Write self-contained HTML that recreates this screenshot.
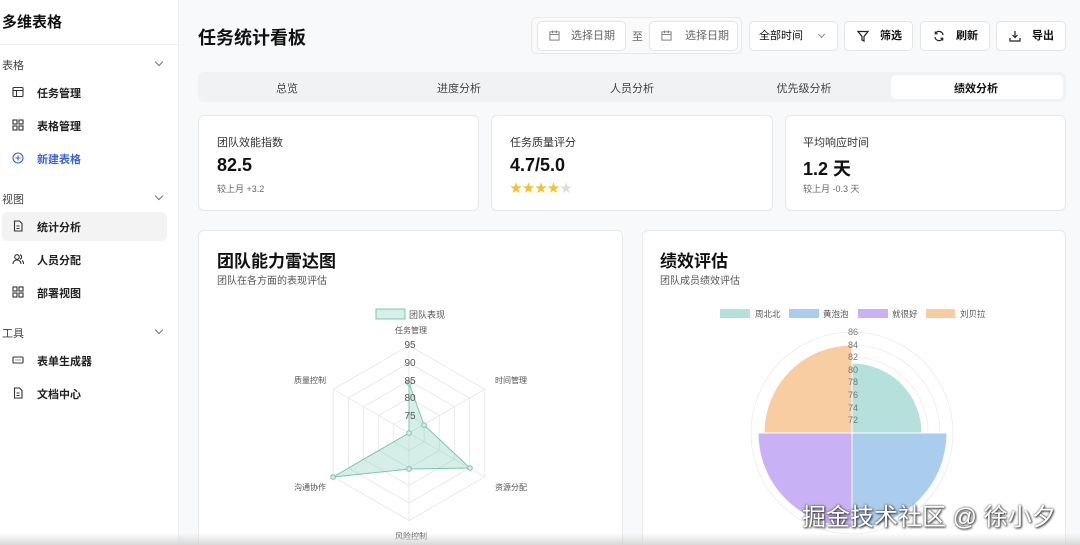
<!DOCTYPE html>
<html style="width:1080px;height:545px;overflow:hidden"><head><meta charset="utf-8"><style>
*{margin:0;padding:0;box-sizing:border-box}
body{width:1080px;height:545px;overflow:hidden;background:#f8f9fa;font-family:"Liberation Sans","Noto Sans CJK SC",sans-serif;color:#111;position:relative}
.abs{position:absolute}
.side{position:absolute;left:0;top:0;width:179px;height:545px;background:#fff;border-right:1px solid #eceef0}
.sec{position:absolute;left:2px;font-size:11px;color:#444}
.chev{position:absolute;left:156px;width:6px;height:6px;border-right:1px solid #777;border-bottom:1px solid #777;transform:rotate(45deg)}
.item{position:absolute;left:37px;font-size:11px;font-weight:600;color:#222}
.ico{position:absolute;left:12px}
.card{position:absolute;background:#fff;border:1px solid #e6e8ea;border-radius:6px}
.btn{position:absolute;background:#fff;border:1px solid #e3e5e7;border-radius:5px;height:30px;font-size:11px;font-weight:600;line-height:28px}
.lbl{font-size:11px;color:#333}
.val{font-size:18px;font-weight:700}
.sub{font-size:9px;color:#666}
.tab{position:absolute;top:80px;font-size:11px;color:#444;text-align:center;width:170px}
</style></head><body>
<div class="side">
 <div class="abs" style="left:2px;top:11px;font-size:15px;font-weight:700">多维表格</div>
 <div class="abs" style="left:0;top:44px;width:179px;height:1px;background:#eceef0"></div>
 <div class="sec" style="top:57px">表格</div><div class="chev" style="top:59px"></div>
 <svg class="ico" style="top:86px" width="12" height="12" viewBox="0 0 12 12" fill="none" stroke="#333" stroke-width="1.1"><rect x="1" y="1.5" width="10" height="9" rx="1"/><path d="M1 4.5h10M4.5 4.5v6"/></svg>
 <div class="item" style="top:85px">任务管理</div>
 <svg class="ico" style="top:119px" width="12" height="12" viewBox="0 0 12 12" fill="none" stroke="#333" stroke-width="1.1"><rect x="1" y="1" width="4" height="4"/><rect x="7" y="1" width="4" height="4"/><rect x="1" y="7" width="4" height="4"/><rect x="7" y="7" width="4" height="4"/></svg>
 <div class="item" style="top:118px">表格管理</div>
 <svg class="ico" style="top:152px" width="12" height="12" viewBox="0 0 12 12" fill="none" stroke="#3a63d8" stroke-width="1.1"><circle cx="6" cy="6" r="5"/><path d="M6 3.5v5M3.5 6h5"/></svg>
 <div class="item" style="top:151px;color:#3a63d8">新建表格</div>
 <div class="sec" style="top:191px">视图</div><div class="chev" style="top:193px"></div>
 <div class="abs" style="left:2px;top:212px;width:165px;height:29px;background:#f3f3f4;border-radius:5px"></div>
 <svg class="ico" style="top:220px" width="12" height="12" viewBox="0 0 12 12" fill="none" stroke="#333" stroke-width="1.1"><path d="M2.5 1h5l2.5 2.5V11h-7.5z M4.5 6h3M4.5 8.5h3"/></svg>
 <div class="item" style="top:219px">统计分析</div>
 <svg class="ico" style="top:253px" width="12" height="12" viewBox="0 0 12 12" fill="none" stroke="#333" stroke-width="1.1"><circle cx="5" cy="4" r="2.3"/><path d="M1 11c0-2.5 1.8-4 4-4s4 1.5 4 4M8 1.8a2.3 2.3 0 0 1 0 4.4M10 7.5c1 .6 1.5 1.8 1.5 3.5"/></svg>
 <div class="item" style="top:252px">人员分配</div>
 <svg class="ico" style="top:286px" width="12" height="12" viewBox="0 0 12 12" fill="none" stroke="#333" stroke-width="1.1"><rect x="1" y="1" width="4" height="4"/><rect x="7" y="1" width="4" height="4"/><rect x="1" y="7" width="4" height="4"/><rect x="7" y="7" width="4" height="4"/></svg>
 <div class="item" style="top:285px">部署视图</div>
 <div class="sec" style="top:325px">工具</div><div class="chev" style="top:327px"></div>
 <svg class="ico" style="top:354px" width="12" height="12" viewBox="0 0 12 12" fill="none" stroke="#333" stroke-width="1.1"><rect x="1" y="3" width="10" height="6" rx="1"/><path d="M3.5 6h1M5.5 6h1M7.5 6h1"/></svg>
 <div class="item" style="top:353px">表单生成器</div>
 <svg class="ico" style="top:387px" width="12" height="12" viewBox="0 0 12 12" fill="none" stroke="#333" stroke-width="1.1"><path d="M2.5 1h5l2.5 2.5V11h-7.5z M4.5 6h3M4.5 8.5h3"/></svg>
 <div class="item" style="top:386px">文档中心</div>
</div>

<div class="abs" style="left:198px;top:24px;font-size:18px;font-weight:700">任务统计看板</div>

<div class="abs" style="left:531px;top:17px;width:211px;height:37px;border:1px solid #e6e8ea;border-radius:5px;background:#fafafa"></div>
<div class="btn" style="left:537px;top:21px;width:89px;font-weight:400;color:#666"><svg class="abs" style="left:11px;top:8px" width="11" height="11" viewBox="0 0 12 12" fill="none" stroke="#777"><rect x="1" y="2" width="10" height="9"/><path d="M1 5h10M4 0.5v3M8 0.5v3"/></svg><span class="abs" style="left:33px">选择日期</span></div>
<div class="abs" style="left:632px;top:28px;font-size:11px;color:#666">至</div>
<div class="btn" style="left:649px;top:21px;width:89px;font-weight:400;color:#666"><svg class="abs" style="left:11px;top:8px" width="11" height="11" viewBox="0 0 12 12" fill="none" stroke="#777"><rect x="1" y="2" width="10" height="9"/><path d="M1 5h10M4 0.5v3M8 0.5v3"/></svg><span class="abs" style="left:35px">选择日期</span></div>
<div class="btn" style="left:749px;top:21px;width:89px;font-weight:400;color:#111"><span class="abs" style="left:9px">全部时间</span><div class="abs" style="left:69px;top:10px;width:5px;height:5px;border-right:1px solid #888;border-bottom:1px solid #888;transform:rotate(45deg)"></div></div>
<div class="btn" style="left:844px;top:21px;width:69px"><svg class="abs" style="left:12px;top:8px" width="12" height="12" viewBox="0 0 12 12" fill="none" stroke="#222" stroke-width="1.2"><path d="M1 1.5h10L7 6.5V11L5 10V6.5z"/></svg><span class="abs" style="left:35px">筛选</span></div>
<div class="btn" style="left:920px;top:21px;width:70px"><svg class="abs" style="left:12px;top:8px" width="12" height="12" viewBox="0 0 12 12" fill="none" stroke="#222" stroke-width="1.2"><path d="M10 5a4 4 0 0 0-7.5-1.5M2 7a4 4 0 0 0 7.5 1.5M2.3 1.5v2.3h2.3M9.7 10.5V8.2H7.4"/></svg><span class="abs" style="left:35px">刷新</span></div>
<div class="btn" style="left:996px;top:21px;width:70px"><svg class="abs" style="left:12px;top:8px" width="12" height="12" viewBox="0 0 12 12" fill="none" stroke="#222" stroke-width="1.2"><path d="M6 1v6.5M3.5 5L6 7.5 8.5 5M1 8v3h10V8"/></svg><span class="abs" style="left:35px">导出</span></div>

<div class="abs" style="left:198px;top:72px;width:868px;height:30px;background:#f1f2f3;border-radius:6px"></div>
<div class="abs" style="left:891px;top:75px;width:172px;height:24px;background:#fff;border-radius:5px"></div>
<div class="tab" style="left:202px">总览</div>
<div class="tab" style="left:374px">进度分析</div>
<div class="tab" style="left:547px">人员分析</div>
<div class="tab" style="left:719px">优先级分析</div>
<div class="tab" style="left:891px;color:#111;font-weight:600">绩效分析</div>

<div class="card" style="left:198px;top:115px;width:281px;height:96px">
 <div class="abs lbl" style="left:18px;top:18px">团队效能指数</div>
 <div class="abs val" style="left:18px;top:39px">82.5</div>
 <div class="abs sub" style="left:18px;top:66px">较上月 +3.2</div>
</div>
<div class="card" style="left:491px;top:115px;width:282px;height:96px">
 <div class="abs lbl" style="left:18px;top:18px">任务质量评分</div>
 <div class="abs val" style="left:18px;top:39px">4.7/5.0</div>
 <div class="abs" style="left:18px;top:63px;font-size:12px;letter-spacing:0.5px;color:#f2c12e">★★★★<span style="color:#ddd">★</span></div>
</div>
<div class="card" style="left:785px;top:115px;width:281px;height:96px">
 <div class="abs lbl" style="left:17px;top:18px">平均响应时间</div>
 <div class="abs val" style="left:17px;top:39px">1.2 天</div>
 <div class="abs sub" style="left:17px;top:66px">较上月 -0.3 天</div>
</div>

<div class="card" style="left:198px;top:230px;width:425px;height:325px">
 <div class="abs" style="left:18px;top:16px;font-size:17px;font-weight:700">团队能力雷达图</div>
 <div class="abs" style="left:18px;top:41px;font-size:10px;color:#555">团队在各方面的表现评估</div>
</div>
<div class="card" style="left:642px;top:230px;width:424px;height:325px">
 <div class="abs" style="left:17px;top:16px;font-size:17px;font-weight:700">绩效评估</div>
 <div class="abs" style="left:17px;top:41px;font-size:10px;color:#555">团队成员绩效评估</div>
</div>

<svg class="abs" style="left:0;top:0" width="1080" height="545" font-family="Liberation Sans,Noto Sans CJK SC,sans-serif">
 <rect x="376" y="309" width="29" height="10" fill="#d6efe8" stroke="#7cc5b0"/>
 <text x="409" y="318" font-size="9" fill="#555">团队表现</text>
 <g fill="none" stroke="#e6e6e6" stroke-width="0.8">
  <polygon points="409,345.5 484.8,389.3 484.8,476.8 409,520.5 333.2,476.8 333.2,389.3"/>
  <polygon points="409,363 469.6,398 469.6,468 409,503 348.4,468 348.4,398"/>
  <polygon points="409,380.5 454.5,406.8 454.5,459.3 409,485.5 363.5,459.3 363.5,406.8"/>
  <polygon points="409,398 439.3,415.5 439.3,450.5 409,468 378.7,450.5 378.7,415.5"/>
  <polygon points="409,415.5 424.2,424.3 424.2,441.8 409,450.5 393.8,441.8 393.8,424.3"/>
  <path d="M409 433L409 345.5M409 433L484.8 389.3M409 433L484.8 476.8M409 433L409 520.5M409 433L333.2 476.8M409 433L333.2 389.3"/>
 </g>
 <polygon points="409,383 424,425 470,468 409,469 333,477 409,433" fill="rgba(120,200,180,0.3)" stroke="#7cc5b0" stroke-width="1"/>
 <g fill="#d6efe8" stroke="#7cc5b0"><circle cx="409" cy="383" r="2.3"/><circle cx="424" cy="425" r="2.3"/><circle cx="470" cy="468" r="2.3"/><circle cx="409" cy="469" r="2.3"/><circle cx="333" cy="477" r="2.3"/><circle cx="409" cy="433" r="2.3"/></g>
 <g font-size="10" fill="#555" text-anchor="middle"><text x="410" y="348">95</text><text x="410" y="366">90</text><text x="410" y="384">85</text><text x="410" y="401">80</text><text x="410" y="419">75</text></g>
 <g font-size="8" fill="#555"><text x="395" y="333">任务管理</text><text x="495" y="383">时间管理</text><text x="495" y="490">资源分配</text><text x="395" y="539">风险控制</text><text x="294" y="490">沟通协作</text><text x="294" y="383">质量控制</text></g>

 <g font-size="8.5" fill="#555">
  <rect x="720" y="309" width="30" height="9" fill="#b5e0dc"/><text x="755" y="317">周北北</text>
  <rect x="789" y="309" width="30" height="9" fill="#aacdee"/><text x="823" y="317">黄泡泡</text>
  <rect x="858" y="309" width="30" height="9" fill="#c8b2f5"/><text x="892" y="317">就很好</text>
  <rect x="926" y="309" width="29" height="9" fill="#f8cda2"/><text x="960" y="317">刘贝拉</text>
 </g>
 <g fill="none" stroke="#ececec" stroke-width="0.8"><circle cx="852" cy="433" r="13"/><circle cx="852" cy="433" r="26"/><circle cx="852" cy="433" r="38"/><circle cx="852" cy="433" r="51"/><circle cx="852" cy="433" r="63"/><circle cx="852" cy="433" r="76"/><circle cx="852" cy="433" r="88"/><circle cx="852" cy="433" r="101"/></g>
 <path d="M852 433L852 363A70 70 0 0 1 922 433Z" fill="#b5e0dc" stroke="#fff"/>
 <path d="M852 433L947 433A95 95 0 0 1 852 528Z" fill="#aacdee" stroke="#fff"/>
 <path d="M852 433L852 527A94 94 0 0 1 758 433Z" fill="#c8b2f5" stroke="#fff"/>
 <path d="M852 433L764 433A88 88 0 0 1 852 345Z" fill="#f8cda2" stroke="#fff"/>
 <g font-size="9" fill="#777" text-anchor="middle"><text x="853" y="335">86</text><text x="853" y="348">84</text><text x="853" y="360">82</text><text x="853" y="373">80</text><text x="853" y="385">78</text><text x="853" y="398">76</text><text x="853" y="411">74</text><text x="853" y="423">72</text></g>
</svg>
<div class="abs" style="left:0;top:533px;width:1080px;height:12px;background:linear-gradient(#fff0,#d8d8d8)"></div>
<div class="abs" style="left:802px;top:497px;font-size:24px;color:#fff;text-shadow:0 0 2px #333,1px 1px 2px #333;font-family:'Liberation Sans','Noto Sans CJK SC',sans-serif">掘金技术社区 @ 徐小夕</div>
</body></html>
